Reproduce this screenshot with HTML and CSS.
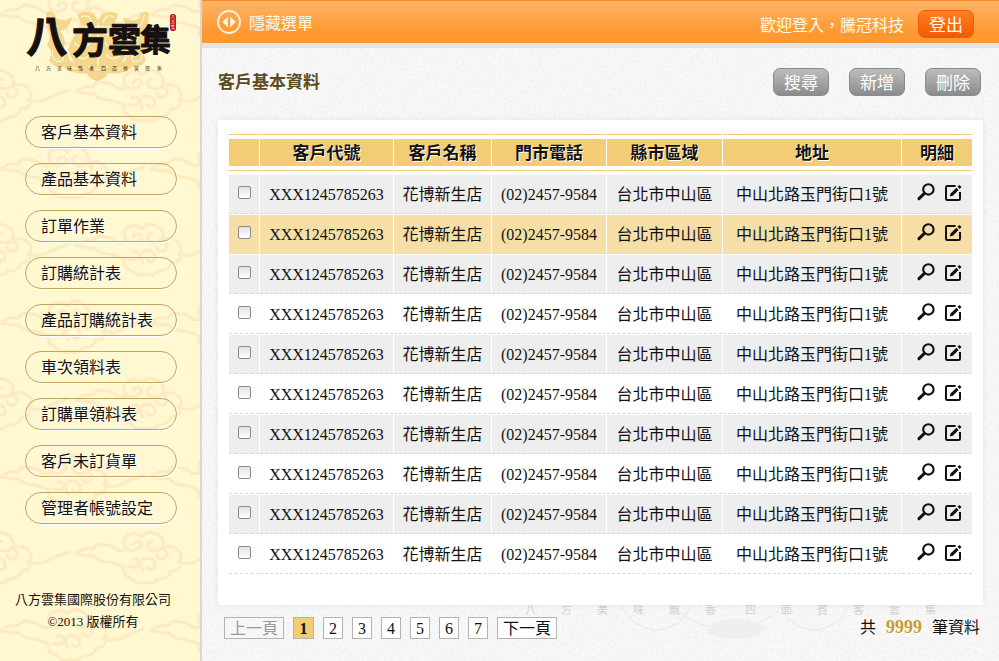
FILE: index.html
```html
<!DOCTYPE html>
<html lang="zh-Hant">
<head>
<meta charset="utf-8">
<meta name="viewport" content="width=device-width, initial-scale=1">
<title>客戶基本資料</title>
<link rel="stylesheet" href="styles.css">
</head>
<body>
<svg class="defs" aria-hidden="true">
  <defs>
    <symbol id="icon-search" viewBox="0 0 18 18">
      <circle cx="11.4" cy="6.4" r="5.2" fill="none" stroke="currentColor" stroke-width="2.1"/>
      <path d="M7.4 10.4 2 15.6" fill="none" stroke="currentColor" stroke-width="3" stroke-linecap="round"/>
    </symbol>
    <symbol id="icon-edit" viewBox="0 0 18 18">
      <path d="M10.6 3H2.2Q1 3 1 4.2V15.8Q1 17 2.2 17H13.8Q15 17 15 15.8V9" fill="none" stroke="currentColor" stroke-width="2"/>
      <path d="M4.8 13.6 5.6 10.6 11.4 4.8 13.6 7 7.8 12.8Z" fill="currentColor"/>
      <path d="M12.5 3.7 14.3 1.9 16.5 4.1 14.7 5.9Z" fill="currentColor"/>
    </symbol>
  </defs>
</svg>
<div class="app">
  <aside class="sidebar">
    <svg class="clouds" aria-hidden="true">
      <defs>
        <g id="cloud" fill="none" stroke="#fdeac2" stroke-width="3" stroke-linecap="round" stroke-linejoin="round">
          <path d="M-64 0Q-56 -7 -47 -5Q-43 -12 -35 -9Q-28 -9 -23 -4Q-17 -2 -14 -5Q-20 -17 -9 -20Q-2 -22 2 -17Q8 -25 18 -19Q26 -14 22 -6Q32 -10 39 -3Q44 4 38 8Q50 12 60 5Q68 2 78 -2"/>
          <path d="M-64 0Q-52 2 -46 2Q-40 8 -32 8Q-22 10 -16 13Q-18 22 -9 24Q-4 31 5 28Q13 31 18 25Q29 25 31 17Q38 17 40 12"/>
          <path d="M-12 12Q-2 16 -1 8Q-3 3 -8 6M-14 -5Q-8 -2 -2 -5Q4 -8 0 -12Q-6 -13 -7 -9M22 -6Q16 -1 9 -5Q5 -12 12 -13M22 -6Q31 -1 24 5Q17 6 17 1M3 17Q-3 6 6 4Q16 4 15 13Q11 18 7 13"/>
        </g>
        <pattern id="cloud-tile" width="150" height="154" patternUnits="userSpaceOnUse">
          <use href="#cloud" x="-10" y="92"/>
          <use href="#cloud" x="140" y="92"/>
          <use href="#cloud" x="65" y="15"/>
          <use href="#cloud" x="-85" y="15"/>
          <use href="#cloud" x="65" y="169"/>
          <use href="#cloud" x="215" y="15"/>
        </pattern>
      </defs>
      <rect width="100%" height="100%" fill="url(#cloud-tile)"/>
    </svg>
    <a class="logo" href="#" aria-label="八方雲集">
      <svg viewBox="0 0 160 80" width="160" height="80">
        <g fill="#f5d68d">
          <path d="M58 22H98L108 44Q104 60 90 66Q84 75 77 76Q70 75 65 66Q52 60 48 44Z"/>
          <path d="M26 8Q34 4 36 13Q42 18 52 12Q50 24 40 26Q48 34 43 46Q52 50 48 60Q36 66 29 55Q34 46 27 40Q33 29 27 23ZM129 8Q121 4 119 13Q113 18 103 12Q105 24 115 26Q107 34 112 46Q103 50 107 60Q119 66 126 55Q121 46 128 40Q122 29 128 23ZM57 9Q66 4 74 9L78 15L82 9Q91 4 98 9L94 21H62Z"/>
          <path d="M44 50Q52 60 64 58L68 68Q52 70 44 62ZM112 50Q104 60 92 58L88 68Q104 70 112 62Z"/>
        </g>
        <g fill="none" stroke="#fffad6" stroke-width="1.2">
          <path d="M31 10Q32 20 38 22M31 28Q41 32 37 42M33 45Q30 56 41 57Q46 53 40 50M124 10Q123 20 117 22M124 28Q114 32 118 42M122 45Q125 56 114 57Q109 53 115 50M61 12Q69 8 72 17M94 12Q86 8 83 17M60 26Q68 34 74 26M96 26Q88 34 82 26M54 38Q65 47 71 37M102 38Q91 47 85 37M56 51Q65 57 70 49M100 51Q91 57 86 49M68 61Q78 68 88 61M78 18V60M52 62Q58 66 64 62M104 62Q98 66 92 62"/>
        </g>
        <g class="brush">
          <text x="6" y="47" font-size="42">八</text>
          <text x="52" y="49" font-size="36">方</text>
          <text x="88" y="47" font-size="33">雲</text>
          <text x="120" y="46" font-size="31">集</text>
        </g>
        <rect x="150" y="9" width="6" height="17" rx="2.5" fill="#be1622"/>
        <g class="seal"><text x="151" y="14">八</text><text x="151" y="19">方</text><text x="151" y="24">集</text></g>
        <text class="slogan" y="65" x="15 26 37 47 58 69 81 92 103 114 125 137">八方美味飄香四面賓客雲集</text>
      </svg>
    </a>
    <nav class="menu">
      <a href="#">客戶基本資料</a>
      <a href="#">產品基本資料</a>
      <a href="#">訂單作業</a>
      <a href="#">訂購統計表</a>
      <a href="#">產品訂購統計表</a>
      <a href="#">車次領料表</a>
      <a href="#">訂購單領料表</a>
      <a href="#">客戶未訂貨單</a>
      <a href="#">管理者帳號設定</a>
    </nav>
    <footer class="copyright">八方雲集國際股份有限公司<br>©2013 版權所有</footer>
  </aside>

  <div class="main">
    <svg class="grain" aria-hidden="true">
      <filter id="paper"><feTurbulence type="fractalNoise" baseFrequency="0.35" numOctaves="3"/><feColorMatrix values="0 0 0 0 0.45  0 0 0 0 0.45  0 0 0 0 0.45  0.2 0 0 0 -0.07"/></filter>
      <rect width="100%" height="100%" filter="url(#paper)"/>
    </svg>
    <header class="topbar">
      <button class="toggle" type="button">
        <svg viewBox="0 0 24 24" width="24" height="24" aria-hidden="true">
          <circle cx="12" cy="12" r="11" fill="none" stroke="#fff3d8" stroke-width="1.8"/>
          <path d="M10.8 6.5V17.5L5.4 12ZM13.2 6.5V17.5L18.6 12Z" fill="#fff6e0"/>
        </svg>
        <span>隱藏選單</span>
      </button>
      <div class="session">
        <span>歡迎登入，騰冠科技</span>
        <button class="btn btn-logout" type="button">登出</button>
      </div>
    </header>

    <main class="content">
      <div class="heading">
        <h1>客戶基本資料</h1>
        <div class="actions">
          <button class="btn" type="button">搜尋</button>
          <button class="btn" type="button">新增</button>
          <button class="btn" type="button">刪除</button>
        </div>
      </div>

      <section class="panel">
        <table>
          <colgroup>
            <col class="c-check"><col class="c-code"><col class="c-name"><col class="c-phone"><col class="c-area"><col><col class="c-detail">
          </colgroup>
          <thead>
            <tr><th></th><th>客戶代號</th><th>客戶名稱</th><th>門市電話</th><th>縣市區域</th><th>地址</th><th>明細</th></tr>
          </thead>
          <tbody id="rows"></tbody>
        </table>
      </section>

      <div class="bottom">
        <svg class="watermark" viewBox="0 0 440 50" width="440" height="50" aria-hidden="true">
          <g fill="none" stroke="#e8e8e8">
            <path d="M104 0Q116 24 138 25Q164 24 174 0M262 0Q274 24 296 25Q322 24 332 0M160 6Q210 43 262 6"/>
          </g>
          <ellipse cx="218" cy="24" rx="28" ry="10" fill="#efefef"/>
          <text y="9" x="8 44 80 116 152 188 228 264 300 336 372 408">八方美味飄香四面賓客雲集</text>
        </svg>
        <nav class="pager" aria-label="分頁">
          <a class="off" href="#">上一頁</a>
          <a class="current" href="#">1</a>
          <a href="#">2</a>
          <a href="#">3</a>
          <a href="#">4</a>
          <a href="#">5</a>
          <a href="#">6</a>
          <a href="#">7</a>
          <a href="#">下一頁</a>
        </nav>
        <p class="total">共<strong>9999</strong>筆資料</p>
      </div>
    </main>
  </div>
</div>
<script src="app.js"></script>
</body>
</html>
```

FILE: styles.css
```css
* {
  box-sizing: border-box;
}

body {
  margin: 0;
  font-family: "Liberation Serif", "Noto Sans CJK TC", serif;
  font-size: 16px;
  color: #111;
}

a {
  color: inherit;
  text-decoration: none;
}

button {
  font: inherit;
  cursor: pointer;
}

.defs {
  position: absolute;
  width: 0;
  height: 0;
}

.app {
  display: flex;
  min-height: 100vh;
}

/* Sidebar */

.sidebar {
  position: relative;
  display: flex;
  flex-direction: column;
  flex: 0 0 202px;
  padding-bottom: 28px;
  background: #fff8d0;
  border-right: 2px solid #d9d5d8;
}

.sidebar > * {
  position: relative;
}

.sidebar .clouds {
  position: absolute;
  inset: 0;
  width: 100%;
  height: 100%;
}

.logo {
  margin: 5px 20px 31px;
  height: 80px;
}

.logo svg {
  display: block;
  overflow: visible;
}

.brush {
  font-family: "Noto Sans CJK TC", sans-serif;
  font-weight: 700;
  fill: #171010;
  stroke: #171010;
  stroke-width: 1;
  stroke-linejoin: round;
}

.seal {
  font-size: 4px;
  fill: #fff;
}

.slogan {
  font-size: 5px;
  fill: #4b3a20;
}

.menu {
  display: flex;
  flex-direction: column;
  gap: 15px;
  padding: 0 23px 0 25px;
}

.menu a {
  height: 32px;
  padding: 0 15px;
  line-height: 31px;
  border: 1px solid #bfa668;
  border-radius: 16px;
  box-shadow: 1px 1px 0 #fff;
  text-shadow: 1px 1px 0 #fff;
}

.copyright {
  margin-top: auto;
  padding-right: 14px;
  font-size: 13px;
  line-height: 22px;
  text-align: center;
  white-space: nowrap;
}

/* Main column */

.main {
  position: relative;
  flex: 1;
  min-width: 0;
  background: #f8f8f8;
}

.grain {
  position: absolute;
  inset: 0;
  width: 100%;
  height: 100%;
}

.topbar {
  position: relative;
  display: flex;
  align-items: center;
  justify-content: space-between;
  height: 48px;
  padding: 0 25px 0 15px;
  color: #fffbe8;
  background: linear-gradient(#ffb368, #ff982e 75%);
  border-top: 1px solid #fb8d28;
  border-bottom: 5px solid #e4e4e4;
}

.toggle {
  display: flex;
  align-items: center;
  gap: 8px;
  padding: 0;
  color: inherit;
  background: none;
  border: 0;
}

.toggle svg {
  display: block;
}

.session {
  display: flex;
  align-items: center;
  gap: 14px;
  padding-top: 4px;
}

.btn {
  width: 56px;
  height: 28px;
  padding: 4px 0 0;
  font-size: 17px;
  line-height: 22px;
  color: #fff;
  background: linear-gradient(#bdbdbd, #8b8b8b);
  border: 1px solid #8b8b8b;
  border-radius: 7px;
}

.btn-logout {
  background: linear-gradient(#ff7e22, #f15a02);
  border-color: #f25c05;
}

.content {
  position: relative;
  padding: 0 16px;
}

.heading {
  display: flex;
  align-items: center;
  justify-content: space-between;
  height: 72px;
  padding: 0 2px 4px 0;
}

h1 {
  margin: 0;
  padding-bottom: 4px;
  font-size: 17px;
  font-weight: 700;
  color: #5c4a22;
  text-shadow: 1px 1px 0 #fff;
}

.actions {
  display: flex;
  gap: 20px;
}

.panel {
  position: relative;
  z-index: 1;
  padding: 13px 10px 30px;
  background: #fff;
  box-shadow: 0 0 6px rgba(0, 0, 0, 0.08);
}

/* Table */

table {
  width: 100%;
  table-layout: fixed;
  border-spacing: 1px;
}

.c-check { width: 30px; }
.c-code { width: 133px; }
.c-name { width: 97px; }
.c-phone { width: 114px; }
.c-area { width: 115px; }
.c-detail { width: 70px; }

th {
  height: 40px;
  padding: 0 0 1px;
  font-size: 17px;
  font-weight: 700;
  line-height: 27px;
  text-shadow: 1px 1px 0 #fff;
  background:
    linear-gradient(#f3cd75, #f3cd75) 0 0 / 100% 1px no-repeat,
    linear-gradient(#f3cd75, #f3cd75) 0 5px / 100% 27px no-repeat,
    linear-gradient(#f3cd75, #f3cd75) 0 36px / 100% 1px no-repeat;
}

td {
  height: 39px;
  padding: 2px 0 0;
  line-height: 24px;
  text-align: center;
  white-space: nowrap;
  border-bottom: 1px dashed #d9d9d9;
}

tbody tr:nth-child(odd) td {
  background: #eee;
}

tbody tr.selected td {
  background: #f6dea7;
  border-bottom: 1px solid #f0dcb0;
}

td input {
  appearance: none;
  display: block;
  width: 13px;
  height: 13px;
  margin: 0 auto 6px;
  background: linear-gradient(#e2e2e2, #fff);
  border: 1px solid #8a8a8a;
  border-radius: 2px;
}

.tools {
  display: flex;
  justify-content: center;
  gap: 10px;
  padding: 0 0 6px 5px;
  color: #171010;
}

.tools svg {
  display: block;
  width: 18px;
  height: 18px;
}

/* Pager */

.bottom {
  position: relative;
  display: flex;
  justify-content: space-between;
  padding: 12px 3px 22px 6px;
}

.watermark {
  position: absolute;
  top: 0;
  right: 26px;
  font-size: 11px;
}

.watermark text {
  fill: #d2d2d2;
}

.pager {
  position: relative;
  display: flex;
  gap: 9px;
}

.pager a {
  min-width: 20px;
  height: 22px;
  padding: 0 5px;
  line-height: 21px;
  text-align: center;
  background: #fff;
  border: 1px solid #b3b3b3;
}

.pager .current {
  min-width: 21px;
  font-weight: 700;
  background: #f3cd75;
}

.pager .off {
  color: #999;
  background: #f7f7f7;
}

.total {
  position: relative;
  margin: 0;
  line-height: 20px;
}

.total strong {
  margin: 0 10px;
  font-size: 18px;
  color: #c99a2e;
  text-shadow: 1px 1px 0 #fff;
}
```

FILE: app.js
```js
const customers = Array.from({ length: 10 }, () => ({
  code: 'XXX1245785263',
  name: '花博新生店',
  phone: '(02)2457-9584',
  area: '台北市中山區',
  address: '中山北路玉門街口1號'
}));
const selected = 1;

document.getElementById('rows').innerHTML = customers.map((c, i) => `
  <tr${i === selected ? ' class="selected"' : ''}>
    <td><input type="checkbox" aria-label="選取"></td>
    <td>${c.code}</td>
    <td>${c.name}</td>
    <td>${c.phone}</td>
    <td>${c.area}</td>
    <td>${c.address}</td>
    <td><div class="tools">
      <a href="#" aria-label="檢視"><svg><use href="#icon-search"/></svg></a>
      <a href="#" aria-label="編輯"><svg><use href="#icon-edit"/></svg></a>
    </div></td>
  </tr>`).join('');
```
